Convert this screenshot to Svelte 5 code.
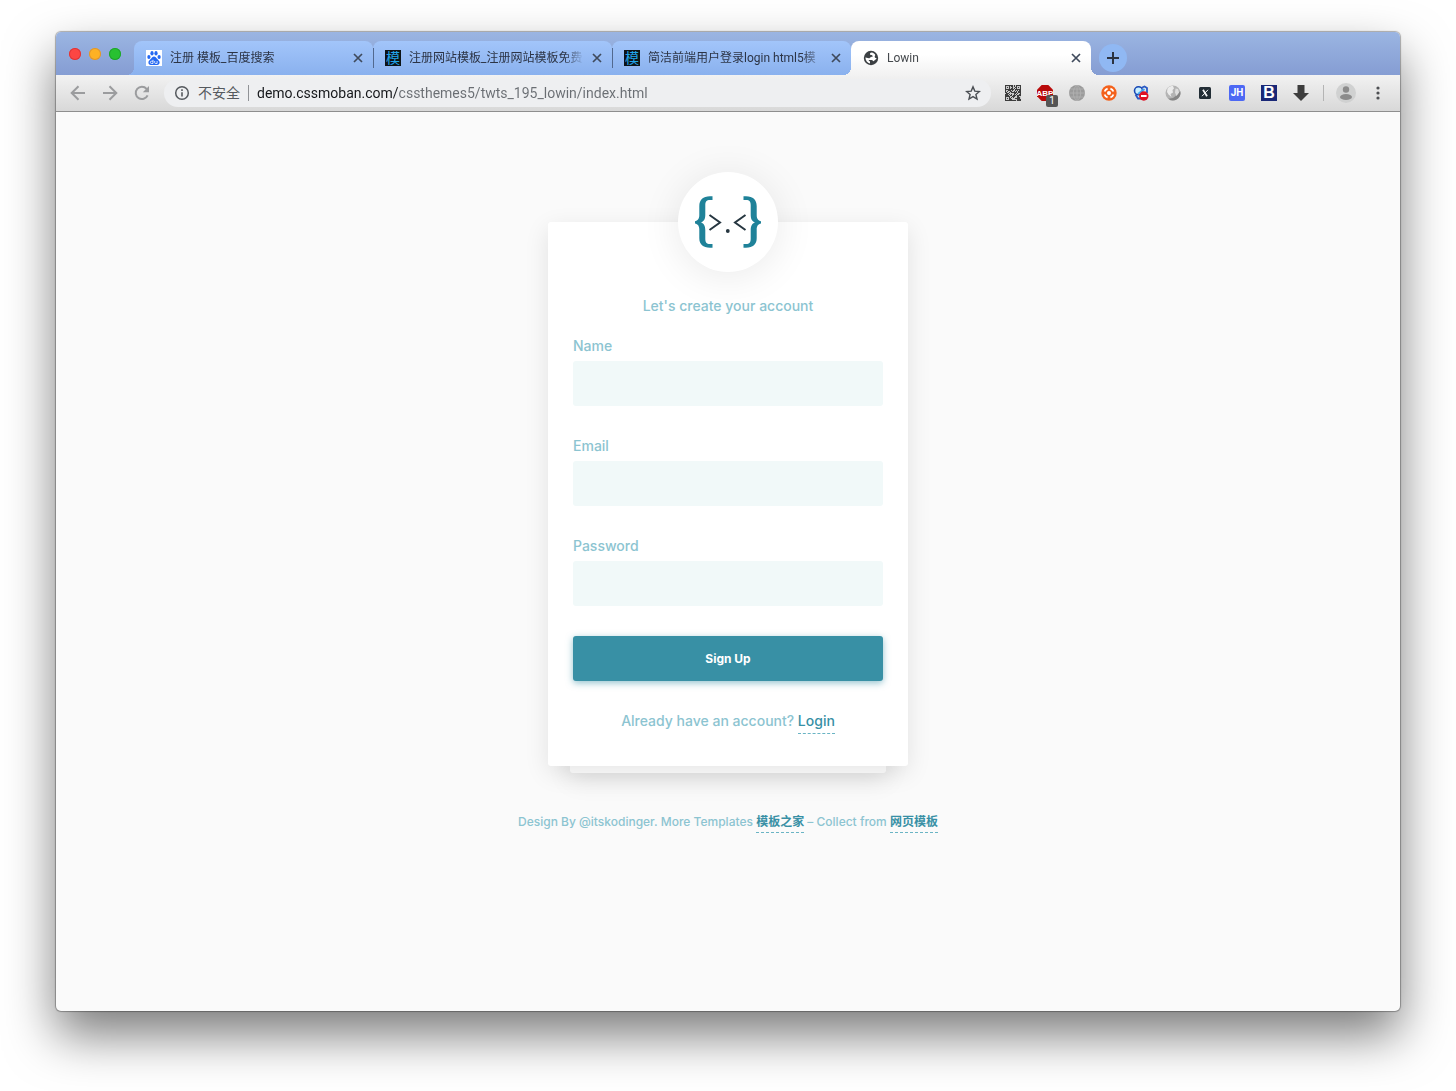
<script>
  const tabs = [
    { title: '注册 模板_百度搜索', icon: 'paw', active: false },
    { title: '注册网站模板_注册网站模板免费', icon: 'mo', active: false },
    { title: '简洁前端用户登录login html5模', icon: 'mo', active: false },
    { title: 'Lowin', icon: 'globe', active: true }
  ];
  const fields = [
    { id: 'name', label: 'Name', type: 'text' },
    { id: 'email', label: 'Email', type: 'email' },
    { id: 'password', label: 'Password', type: 'password' }
  ];

  // Module pattern for the QR code extension icon.
  const qr = [];
  let seed = 7;
  for (let y = 0; y < 16; y++) {
    for (let x = 0; x < 16; x++) {
      seed = (seed * 1103515245 + 12345) % 2147483648;
      const finder = (x < 5 && y < 5) || (x > 10 && y < 5) || (x < 5 && y > 10);
      if (finder) {
        const fx = x > 10 ? x - 11 : x;
        const fy = y > 10 ? y - 11 : y;
        if (fx === 0 || fy === 0 || fx === 4 || fy === 4 || (fx === 2 && fy === 2)) qr.push([x, y]);
      } else if (seed / 2147483648 > 0.42) qr.push([x, y]);
    }
  }
  let address = $state('demo.cssmoban.com/cssthemes5/twts_195_lowin/index.html');
</script>

<div class="desktop">
  <div class="window">
    <header class="strip">
      <div class="lights">
        <button class="light red" aria-label="Close window"></button>
        <button class="light amber" aria-label="Minimize window"></button>
        <button class="light green" aria-label="Zoom window"></button>
      </div>
      <div class="tabs">
        {#each tabs as tab}
          <div class="tab" class:active={tab.active}>
            <button class="tab-title">
              {#if tab.icon === 'paw'}
                <svg class="favicon" viewBox="0 0 16 16" aria-hidden="true">
                  <rect width="16" height="16" fill="#fff" />
                  <g fill="#2468f2">
                    <ellipse cx="2.9" cy="7" rx="1.6" ry="2" />
                    <ellipse cx="6" cy="3.3" rx="1.6" ry="2.2" />
                    <ellipse cx="10" cy="3.3" rx="1.6" ry="2.2" />
                    <ellipse cx="13.1" cy="7" rx="1.6" ry="2" />
                    <path d="M8 6.600c1.500 0 2.200 1.200 3 2.200 1 1.200 2.600 2 2.600 3.700 0 1.500-1 2.500-2.400 2.500H4.800c-1.500 0-2.400-1-2.400-2.500 0-1.700 1.500-2.500 2.600-3.700C5.800 7.800 6.500 6.600 8 6.600z" />
                  </g>
                  <path d="M7 9.800v3.700H5.500a1.100 1.100 0 0 1 0-2.300H7M8.700 11v1.600q0 .9.900.9h1.500V11" fill="none" stroke="#fff" stroke-width=".8" />
                </svg>
              {:else if tab.icon === 'mo'}
                <span class="favicon mo" aria-hidden="true">模</span>
              {:else}
                <svg class="favicon" viewBox="0 0 16 16" aria-hidden="true">
                  <circle cx="8" cy="8" r="7.200" fill="#3c4043" />
                  <path d="M8.800 2.600c-1.800.2-2 1-1.700 2 .4 1 2.200.3 2.500 1.400.3 1-.9 1.100-1.900 1.200-1 .1-.7 1.100-1.700 1.100L2.400 7.600c0 3 2 5.400 4.600 5.900v-1.700c0-1-1.300-.7-1.300-1.900l2.700.1c1.500 0 1.300 1.200 2.300 1.300.6-1.300 2.700-1.600 2.900-3.200-1.300 0-1.900-.6-1.900-1.600s1-1.200.3-2.100c-.8-.9-1.800-1.600-3.200-1.800z" fill="#fff" />
                </svg>
              {/if}
              <span class="label">{tab.title}</span>
            </button>
            <button class="tab-close" aria-label="Close tab">
              <svg viewBox="0 0 16 16"><path d="M4 4l8 8M12 4l-8 8" /></svg>
            </button>
          </div>
        {/each}
      </div>
      <button class="new-tab" aria-label="New tab">
        <svg viewBox="0 0 14 14"><path d="M7 1v12M1 7h12" /></svg>
      </button>
    </header>

    <nav class="toolbar">
      <div class="nav-buttons">
        <button class="cell" aria-label="Back">
          <svg viewBox="0 0 16 16"><path class="nav-line" d="M15 8H2M8.500 1.200L1.700 8l6.800 6.800" /></svg>
        </button>
        <button class="cell" aria-label="Forward">
          <svg viewBox="0 0 16 16"><path class="nav-line" d="M1 8h13M7.500 1.200L14.300 8l-6.800 6.800" /></svg>
        </button>
        <button class="cell" aria-label="Reload">
          <svg viewBox="0 0 16 16">
            <path class="nav-line" d="M13.600 10.400A6.200 6.200 0 1 1 12.600 3.800L14 5.400" />
            <path d="M15 1v6.200H8.800z" fill="#9b9c9e" />
          </svg>
        </button>
      </div>

      <div class="address">
        <svg class="info" viewBox="0 0 16 16" aria-hidden="true">
          <circle cx="8" cy="8" r="6.300" fill="none" stroke="#55595e" stroke-width="1.500" />
          <path d="M8 7.200v4.300M8 4.300v1.600" stroke="#55595e" stroke-width="1.600" />
        </svg>
        <span class="insecure">不安全</span>
        <span class="bar"></span>
        <input class="url" type="text" aria-label="Address" bind:value={address} />
        <button class="star" aria-label="Bookmark">
          <svg viewBox="0 0 16 16"><path d="M8 1.900l1.800 4.200 4.600.4-3.500 3 1.100 4.500-4-2.400L4 14l1.100-4.500-3.500-3 4.600-.4z" fill="none" stroke="#4b4f54" stroke-width="1.400" /></svg>
        </button>
      </div>

      <div class="extensions">
        <button class="cell" aria-label="QR code">
          <svg viewBox="0 0 16 16" shape-rendering="crispEdges">
            <rect width="16" height="16" fill="#c8c8c8" />
            {#each qr as [x, y]}<rect {x} {y} width="1" height="1" fill="#3c3c3c" />{/each}
          </svg>
        </button>
        <button class="cell" aria-label="Ad blocker">
          <svg viewBox="0 0 16 16">
            <path d="M4.700 0h6.600L16 4.700v6.600L11.300 16H4.700L0 11.300V4.700z" fill="#b90a0a" />
            <text x="8" y="11" class="abp">ABP</text>
          </svg>
          <span class="badge">1</span>
        </button>
        <button class="cell" aria-label="Web globe">
          <svg viewBox="0 0 16 16">
            <circle cx="8" cy="8" r="8" fill="#9b9b9b" />
            <path d="M0 8h16M1.500 4h13M1.500 12h13M8 0v16M8 0c-5 4-5 12 0 16M8 0c5 4 5 12 0 16" fill="none" stroke="#b4b4b4" stroke-width=".8" />
          </svg>
        </button>
        <button class="cell" aria-label="Orange ring">
          <svg viewBox="0 0 16 16">
            <circle cx="8" cy="8" r="7.700" fill="#f4611b" />
            <circle cx="8" cy="8" r="2" fill="#fff" />
            <g fill="none" stroke="#fff" stroke-width="1.800">
              <path d="M3.600 6.600Q4.300 4.300 6.600 3.600M9.400 3.600Q11.700 4.300 12.400 6.600M12.400 9.400Q11.700 11.700 9.400 12.400M6.600 12.400Q4.300 11.700 3.600 9.400" />
            </g>
          </svg>
        </button>
        <button class="cell" aria-label="Blocked search">
          <svg viewBox="0 0 16 16">
            <path d="M8 3l3.500-1.500L14 3v5M2.500 9.500L5 13.500h4" fill="none" stroke="#2859c5" stroke-width="1.800" />
            <circle cx="5.500" cy="5.800" r="4" fill="#c9efff" stroke="#1747b4" stroke-width="1.600" />
            <path d="M5 9l6.500-5" stroke="#42a7ef" stroke-width="2" />
            <circle cx="10.800" cy="11" r="4.700" fill="#df1024" />
            <path d="M8 11h5.600" stroke="#fff" stroke-width="2" />
          </svg>
        </button>
        <button class="cell" aria-label="Grey globe">
          <svg viewBox="0 0 16 16">
            <circle cx="8" cy="8" r="7.500" fill="#b4b4b4" />
            <path d="M15.200 6a7.500 7.500 0 0 1-12 7.700L8 13l4-3z" fill="#858585" />
            <path d="M2.500 3.500C4 1.500 6 1 8 1l1 2.500L7.500 5 8 7.500 5.500 9 6.500 12 3.500 9.500 2 7z" fill="#ececec" />
            <path d="M10.500 3.500l2.500.5 1 3.500-2.500 3.500-1.500-3.500z" fill="#dedede" />
          </svg>
        </button>
        <button class="cell" aria-label="X tool">
          <svg viewBox="0 0 16 16">
            <rect x="2" y="2" width="12" height="12" rx="1.500" fill="#222d35" />
            <path d="M6 4.800l4 6.400" stroke="#f4f4f4" stroke-width="1.800" />
            <path d="M11 4.800L5 11.200" stroke="#f4f4f4" stroke-width="1" />
          </svg>
        </button>
        <button class="cell" aria-label="JH tool"><span class="tile jh">JH</span></button>
        <button class="cell" aria-label="B tool"><span class="tile b">B</span></button>
        <button class="cell" aria-label="Download">
          <svg viewBox="0 0 16 16"><path d="M4.500 0h7v8H16l-8 8-8-8h4.500z" fill="#3d3d3d" /></svg>
        </button>
      </div>
      <span class="bar divider"></span>
      <div class="menus">
        <button class="cell" aria-label="Profile">
          <svg class="avatar" viewBox="0 0 20 20">
            <circle cx="10" cy="10" r="10" fill="#d0d1d1" />
            <circle cx="10" cy="6.500" r="3.200" fill="#8b8b8b" />
            <ellipse cx="10" cy="14" rx="6" ry="3" fill="#8b8b8b" />
          </svg>
        </button>
        <button class="cell" aria-label="Menu">
          <svg viewBox="0 0 16 16" fill="#4d4f52">
            <circle cx="8" cy="3" r="1.600" /><circle cx="8" cy="8" r="1.600" /><circle cx="8" cy="13" r="1.600" />
          </svg>
        </button>
      </div>
    </nav>

    <main class="page">
      <div class="brand">
        <svg viewBox="0 0 100 100" role="img" aria-label="Lowin">
          <g fill="#1f8299">
            <path id="brace" d="M34.500 24.300H32C25 24.300 21.300 28 21.300 34v9c0 4-1.500 5.500-4.300 6.200v2.400c2.800.7 4.300 2.200 4.300 6.200v8.500c0 6 3.700 9.400 10.700 9.400h2.500v-3.600H32c-3.600 0-4.700-1.800-4.700-5.300v-8.500c0-4.500-1.200-6.800-4.300-7.900 3.100-1.100 4.300-3.400 4.300-7.900V33.200c0-3.500 1.100-5.300 4.700-5.300h2.500z" />
            <use href="#brace" transform="translate(100 0) scale(-1 1)" />
          </g>
          <path d="M31.500 43l10.500 7.500L31.500 58M67.500 43L57 50.500 67.500 58" fill="none" stroke="#263640" stroke-width="2" />
          <circle cx="49.800" cy="59" r="1.900" fill="#263640" />
        </svg>
      </div>
      <div class="stack">
        <form class="card" onsubmit={(e) => e.preventDefault()}>
          <p class="intro">Let's create your account</p>
          {#each fields as field}
            <div class="field">
              <label for={field.id}>{field.label}</label>
              <input id={field.id} type={field.type} />
            </div>
          {/each}
          <button class="submit">Sign Up</button>
          <p class="switch">Already have an account? <a href="#login">Login</a></p>
        </form>
      </div>
      <footer>
        Design By @itskodinger. More Templates <a href="#templates">模板之家</a> – Collect from <a href="#collect">网页模板</a>
      </footer>
    </main>
  </div>
</div>

<style>
  :global(body) { margin: 0; background: #fff; }
  * { box-sizing: border-box; }
  button { border: 0; padding: 0; margin: 0; background: none; font: inherit; color: inherit; }
  svg { display: block; }
  p { margin: 0; }

  .desktop {
    min-height: 100vh;
    padding: 32px 56px 80px;
    display: flex;
    overflow: hidden;
    font-family: Roboto, "Noto Sans CJK SC", sans-serif;
  }
  .window {
    flex: 1;
    min-width: 0;
    display: flex;
    flex-direction: column;
    border-radius: 5px;
    background: #fafafa;
    box-shadow: 0 0 1px 1px rgba(0, 0, 0, 0.3), 0 24px 50px rgba(0, 0, 0, 0.52);
  }

  .strip {
    display: flex;
    align-items: flex-end;
    height: 43px;
    padding-left: 13px;
    border-radius: 5px 5px 0 0;
    background: linear-gradient(#9bb5e2, #859dd3);
  }
  .lights { display: flex; gap: 8px; margin: 0 13px 15px 0; }
  .light { width: 12px; height: 12px; border-radius: 50%; }
  .red { background: #fc4643; box-shadow: inset 0 0 0 1px #de3538; }
  .amber { background: #fdb124; box-shadow: inset 0 0 0 1px #dd9530; }
  .green { background: #28c131; box-shadow: inset 0 0 0 1px #1fa42b; }

  .tabs { display: flex; flex: 0 1 957px; min-width: 0; }
  .tab {
    position: relative;
    flex: 0 1 239px;
    min-width: 0;
    height: 34px;
    display: flex;
    align-items: center;
    gap: 5px;
    padding: 0 7px 0 12px;
    border-radius: 8px 8px 0 0;
    background: linear-gradient(#a2c5fa, #8ab1ee);
    color: #2c3445;
    font-size: 12px;
  }
  .tab::before, .tab::after {
    content: "";
    position: absolute;
    bottom: 0;
    width: 8px;
    height: 8px;
  }
  .tab::before { right: 100%; background: radial-gradient(circle at 0 0, transparent 8px, #8cb3f0 8px); }
  .tab::after { left: 100%; background: radial-gradient(circle at 100% 0, transparent 8px, #8cb3f0 8px); }
  .tab:nth-child(2)::before, .tab:nth-child(3)::before {
    right: auto;
    left: 0;
    bottom: 7px;
    width: 1px;
    height: 20px;
    background: #52698f;
  }
  .tab.active { z-index: 1; flex-basis: 240px; background: linear-gradient(#fff 40%, #f2f2f2); color: #45494d; }
  .tab.active::before { background: radial-gradient(circle at 0 0, transparent 8px, #f2f2f2 8px); }
  .tab.active::after { background: radial-gradient(circle at 100% 0, transparent 8px, #f2f2f2 8px); }
  .tab-title { flex: 1; min-width: 0; display: flex; align-items: center; gap: 8px; text-align: left; }
  .favicon { flex: none; width: 16px; height: 16px; }
  .mo { background: #0d1417; color: #22a5ea; font-size: 14px; line-height: 16px; text-align: center; }
  .label {
    flex: 1;
    min-width: 0;
    overflow: hidden;
    white-space: nowrap;
    line-height: 20px;
    mask-image: linear-gradient(90deg, #000 calc(100% - 20px), transparent);
  }
  .tab-close, .tab-close svg { width: 16px; height: 16px; }
  .tab-close path { fill: none; stroke: #3f4a5c; stroke-width: 1.7; }
  .new-tab {
    flex: none;
    width: 28px;
    height: 28px;
    margin: 0 0 3px 8px;
    border-radius: 50%;
    background: #90b8f3;
    display: grid;
    place-items: center;
  }
  .new-tab svg { width: 14px; height: 14px; }
  .new-tab path { stroke: #2b3340; stroke-width: 2; }

  .toolbar {
    display: flex;
    align-items: center;
    gap: 6px;
    height: 37px;
    padding: 0 6px;
    border-bottom: 1px solid #8e8e8e;
    background: linear-gradient(#f2f2f2, #d8d8d8);
  }
  .nav-buttons, .extensions, .menus { display: flex; flex: none; }
  .cell { position: relative; flex: none; width: 32px; height: 28px; display: grid; place-items: center; }
  .cell svg { width: 16px; height: 16px; }
  .cell .avatar { width: 20px; height: 20px; }
  .nav-line { fill: none; stroke: #9b9c9e; stroke-width: 2; }
  .address {
    flex: 1;
    min-width: 0;
    height: 28px;
    display: flex;
    align-items: center;
    gap: 8px;
    padding: 0 10px;
    border-radius: 14px;
    background: #eeeff1;
    color: #55595e;
    font-size: 14px;
  }
  .info { flex: none; width: 16px; height: 16px; }
  .insecure { white-space: nowrap; line-height: 20px; }
  .bar { flex: none; width: 1px; height: 16px; background: #909296; }
  .divider { background: #b4b4b4; }
  .url {
    flex: 1;
    min-width: 0;
    border: 0;
    padding: 0;
    outline: 0;
    font: 14px/20px Roboto, sans-serif;
    color: transparent;
    caret-color: #202124;
    background: linear-gradient(90deg, #15171a 141px, #6a6e73 141px);
    background-clip: text;
  }
  .star, .star svg { width: 16px; height: 16px; }
  .abp { fill: #fff; font: bold 8px "Liberation Sans", sans-serif; text-anchor: middle; }
  .badge {
    position: absolute;
    right: 3px;
    bottom: 0;
    width: 12px;
    height: 12px;
    border-radius: 2px;
    background: #555;
    color: #fff;
    font-size: 10px;
    line-height: 12px;
    text-align: center;
  }
  .tile { width: 16px; height: 16px; color: #fff; line-height: 16px; text-align: center; font-weight: 700; }
  .jh { border-radius: 2px; background: #4d68f4; font-size: 10px; }
  .b { background: #1a2877; font-size: 16px; font-family: "Liberation Sans", sans-serif; }

  .page {
    flex: 1;
    display: flex;
    flex-direction: column;
    align-items: center;
    padding: 60px 20px;
    font-family: Inter, "Noto Sans CJK SC", sans-serif;
    font-size: 14px;
    line-height: 20px;
    font-weight: 500;
    color: #8cc4d1;
  }
  .brand {
    position: relative;
    z-index: 1;
    width: 100px;
    height: 100px;
    border-radius: 50%;
    background: #fff;
    box-shadow: 0 4px 40px rgba(0, 0, 0, 0.09);
  }
  .stack { position: relative; isolation: isolate; width: 100%; max-width: 360px; margin-top: -50px; }
  .stack::before {
    content: "";
    position: absolute;
    inset: 22px 22px -7px;
    z-index: -1;
    border-radius: 3px;
    background: #fff;
    box-shadow: 0 7px 25px rgba(0, 0, 0, 0.1);
  }
  .card {
    padding: 74px 25px 35px;
    border-radius: 3px;
    background: #fff;
    box-shadow: 0 7px 25px rgba(0, 0, 0, 0.1);
  }
  .intro { margin-bottom: 20px; text-align: center; }
  .field { display: flex; flex-direction: column; gap: 5px; margin-bottom: 30px; }
  .field input {
    height: 45px;
    border: 0;
    border-radius: 3px;
    padding: 0 15px;
    background: #f1f9f9;
    font: inherit;
    color: #3890a5;
  }
  .submit {
    display: block;
    width: 100%;
    height: 45px;
    border-radius: 3px;
    background: #3890a5;
    color: #fff;
    font-size: 12px;
    font-weight: 700;
    box-shadow: 0 2px 7px rgba(56, 144, 165, 0.55);
  }
  .switch { margin-top: 30px; text-align: center; }
  a { padding-bottom: 4px; border-bottom: 1px dashed #6ab4c4; color: #3890a5; text-decoration: none; }
  footer { margin-top: 46px; font-size: 12px; text-align: center; }
  footer a { padding-bottom: 3px; font-weight: 700; }
</style>
